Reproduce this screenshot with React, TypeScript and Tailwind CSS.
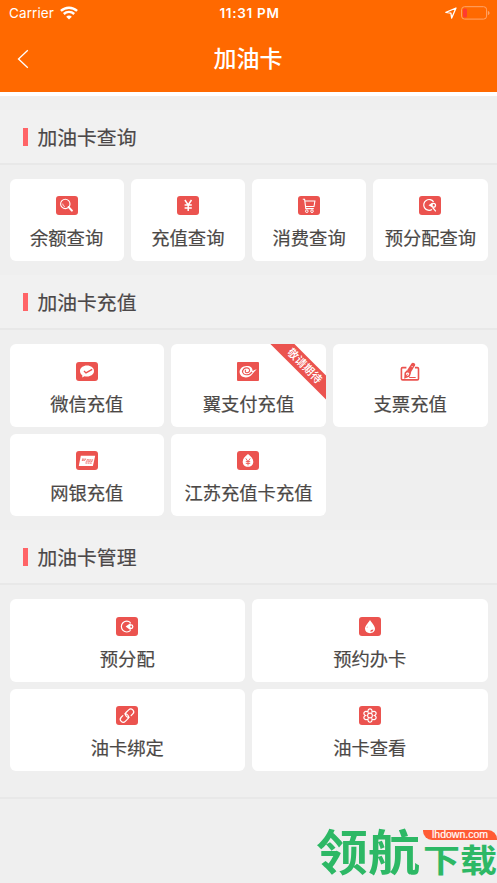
import type { ReactNode } from "react";

type Item = { label: string; icon: ReactNode; soon?: boolean };

const RED = "#eb534f";

function Tile({ children, r = 3 }: { children?: ReactNode; r?: number }) {
  return (
    <svg width="22" height="19" viewBox="0 0 22 19" fill="none" stroke="#fff" strokeWidth="1" className="block">
      <rect width="22" height="19" rx={r} fill={RED} stroke="none" />
      {children}
    </svg>
  );
}

const SearchIcon = (
  <Tile>
    <circle cx="9.3" cy="7.9" r="4.7" strokeWidth="1.1" />
    <path d="M6.7 7.6a2.9 2.9 0 0 0 2.2 3" strokeWidth="0.8" />
    <path d="m12.7 11.1 3.2 3.5" strokeWidth="2.1" strokeLinecap="round" />
  </Tile>
);
const YenIcon = (
  <Tile>
    <path d="m7.9 4 3.3 5 3.3-5M11.2 9v6M7.6 9.1h7.2M7.6 11.9h7.2" strokeWidth="1.5" />
  </Tile>
);
const CartIcon = (
  <Tile>
    <path d="M4.8 3.2h1.8l1.2 9.4h8M7 5h9.9l-.9 5.5H7.8" strokeWidth="1.1" />
    <circle cx="8.8" cy="15.2" r="1.3" />
    <circle cx="14" cy="15.2" r="1.3" />
  </Tile>
);
const AllocateSearchIcon = (
  <Tile>
    <path d="M14.6 5.9A5.4 5.4 0 1 0 13 13.5M13.7 11.5l3.1 3.8" strokeWidth="1.2" />
    <path d="m9.5 9.2 4-2.7v5z" fill="#fff" stroke="none" />
    <circle cx="14.6" cy="9.3" r="1.9" strokeWidth="1.3" />
  </Tile>
);
const AllocateIcon = (
  <Tile>
    <path d="M14.6 5.8a5.4 5.4 0 1 0 0 7.6" strokeWidth="1.2" />
    <path d="m9.6 9.6 5-3.6v7.2z" fill="#fff" stroke="none" />
    <circle cx="15" cy="9.7" r="1.8" strokeWidth="1.3" />
    <path d="M14.4 9.7h1.4" stroke={RED} strokeWidth="1" />
  </Tile>
);
const WechatIcon = (
  <Tile>
    <path d="M11 3.6c-4 0-7 2.4-7 5.5 0 1.8.9 3.3 2.4 4.3l-.2 2 2.3-1.2c.8.3 1.6.4 2.5.4 4 0 7-2.4 7-5.5s-3-5.5-7-5.5z" fill="#fff" stroke="none" />
    <path d="m8 9 2 1.9 6.2-3.6" stroke={RED} strokeWidth="1.4" />
  </Tile>
);
const BestpayIcon = (
  <Tile r={1}>
    <path d="M9.4 3.900c4.300-.3 6.500 2.300 6.100 5.200 1.200-.8 2.400-1.900 4.200-1.700-2.300 1.400-3.400 3.700-5.200 5.700-3 3.600-11.300 3.400-11.900-2.800C2.300 6.700 5.400 4.200 9.400 3.900z" fill="#fff" stroke="none" />
    <path d="M9 8.100c-1.200.5-1 2.600.9 2.700 1.800 0 2.900-1.300 2.700-2.800C12.200 5.500 8.600 5.200 6.700 7c-2.200 2.200-1 5.500 2.200 5.800 2.800.2 4.800-1.200 6.200-3" stroke={RED} strokeWidth="1.100" />
  </Tile>
);
const ChequeIcon = (
  <svg width="22" height="19" viewBox="0 0 22 19" fill="none" stroke={RED} strokeWidth="1.6" className="block">
    <path d="M7.4 5.6H3.6A1.2 1.2 0 0 0 2.4 6.8v9.9c0 .7.5 1.2 1.2 1.2h14.7c.7 0 1.2-.5 1.2-1.2V6.8c0-.7-.5-1.2-1.2-1.2h-2.4" />
    <path d="M10.2 15.5h6.5" strokeWidth="1" />
    <path d="m8.1 8.3 4.6-7.1c1-1.500 4.300.3 3.400 2l-4.500 7.500z" fill={RED} stroke="none" />
    <path d="m8.2 9.1 3 1.8-1 3-4.1 1.7.2-4.6z" strokeWidth="1.6" />
    <path d="m6.2 15.4 2.5-3.6" strokeWidth=".9" />
    <circle cx="13.1" cy="4.6" r=".6" fill="#fff" stroke="none" />
  </svg>
);
const BankIcon = (
  <Tile>
    <path d="M4.8 4.7h14.4l-2.3 10.2H2.8z" fill="#fff" stroke="none" />
    <path d="m6 8.1 4.5.1M11 8.8l6.1.2M5.8 9.3l3.1.1M9.8 10.1l6.7.2M9.4 12l6.3.1" stroke={RED} strokeWidth=".9" strokeDasharray="1.9 .4" />
  </Tile>
);
const YenDropIcon = (
  <Tile>
    <path d="M11 3.1C8.2 5.2 5.7 7.6 5.7 10.7c0 3 2.2 5 5.3 5s5.3-2 5.3-5c0-3.1-2.5-5.5-5.3-7.6z" fill="#fff" stroke="none" />
    <path d="m8.8 7.4 2.2 3.2 2.2-3.2M11 10.4v4M8.8 10.6h4.4M8.8 12.4h4.4" stroke={RED} strokeWidth=".9" />
  </Tile>
);
const DropIcon = (
  <Tile>
    <path d="M11 3C9.6 5.6 6 8.6 6 11.8c0 2.8 2.2 4.4 5 4.4s5-1.6 5-4.4C16 8.6 12.4 5.6 11 3z" fill="#fff" stroke="none" />
    <path d="M11.2 14.6c.1-1.5 1.3-2.2 3.2-2.2-.2 1.6-1.4 2.5-3.2 2.2zM7.3 10.2l1.3-.8v1.2z" fill={RED} stroke="none" />
  </Tile>
);
const LinkIcon = (
  <Tile>
    <g transform="translate(11 9.6) rotate(-45)" strokeWidth="1.2" strokeLinecap="round">
      <path d="M.3 2.700C-1.500 1.800-1.700-2.900 1.800-2.900H5.300a2.900 2.900 0 0 1 0 5.800H3" />
      <path d="M-.3-2.700C1.500-1.800 1.700 2.900-1.800 2.900h-3.500a2.900 2.900 0 0 1 0-5.800H-3" />
    </g>
  </Tile>
);
const FlowerIcon = (
  <Tile>
    <path d="M9 5.9c-.7-4.1 4.7-4.1 4 0 3.4-2.2 6 2.2 2.4 3.6 3.6 1.4 1 5.8-2.4 3.6.7 4.1-4.7 4.1-4 0-3.4 2.2-6-2.2-2.4-3.6C3 8.1 5.6 3.7 9 5.9z" strokeWidth="1.2" />
    <circle cx="11" cy="9.5" r="2.4" strokeWidth="1.1" />
  </Tile>
);

const sections: { title: string; cols: string; items: Item[] }[] = [
  {
    title: "加油卡查询",
    cols: "grid-cols-4",
    items: [
      { label: "余额查询", icon: SearchIcon },
      { label: "充值查询", icon: YenIcon },
      { label: "消费查询", icon: CartIcon },
      { label: "预分配查询", icon: AllocateSearchIcon },
    ],
  },
  {
    title: "加油卡充值",
    cols: "grid-cols-3",
    items: [
      { label: "微信充值", icon: WechatIcon },
      { label: "翼支付充值", icon: BestpayIcon, soon: true },
      { label: "支票充值", icon: ChequeIcon },
      { label: "网银充值", icon: BankIcon },
      { label: "江苏充值卡充值", icon: YenDropIcon },
    ],
  },
  {
    title: "加油卡管理",
    cols: "grid-cols-2",
    items: [
      { label: "预分配", icon: AllocateIcon },
      { label: "预约办卡", icon: DropIcon },
      { label: "油卡绑定", icon: LinkIcon },
      { label: "油卡查看", icon: FlowerIcon },
    ],
  },
];

function Card({ label, icon, soon }: Item) {
  return (
    <div className="relative flex h-[82.5px] flex-col items-center overflow-hidden rounded-md bg-white pt-[17.5px]">
      {icon}
      <span className="mt-[8px] text-[18.3px] leading-7 whitespace-nowrap text-[#4b4846] [-webkit-text-stroke:0.2px_#4b4846]">
        {label}
      </span>
      {soon && (
        <div className="absolute top-[13px] -right-[18.5px] flex h-[16.5px] w-[80px] rotate-45 items-center justify-center bg-[#eb534f] pb-px pl-[2px] text-[11px] leading-none font-medium whitespace-nowrap text-white">
          敬请期待
        </div>
      )}
    </div>
  );
}

export default function App() {
  return (
    <div className="relative h-[883px] w-[497px] overflow-hidden bg-[#efefef] font-['Noto_Sans_CJK_SC',sans-serif]">
      <header className="h-24 border-b-4 border-white bg-[#ff6900] text-white">
        <div className="grid h-[26px] grid-cols-3 items-center pr-[7px] pl-[9px] font-['Inter','Liberation_Sans',sans-serif] text-[13.5px]">
          <div className="flex items-center gap-[6px]">
            <span className="tracking-[0.1px]">Carrier</span>
            <svg width="18" height="14" viewBox="0 0 18 14" fill="none" stroke="#fff" strokeWidth="2.4">
              <path d="M.9 4.9c4.6-4.3 11.6-4.3 16.2 0M3.8 8c3-2.8 7.4-2.8 10.4 0" />
              <path d="M6.2 10.7c1.6-1.5 4-1.5 5.6 0L9 13.5z" fill="#fff" stroke="none" />
            </svg>
          </div>
          <span className="text-center font-semibold tracking-[0.7px] whitespace-nowrap">11:31 PM</span>
          <div className="flex items-center justify-end gap-1">
            <svg width="12" height="12" viewBox="0 0 12 12" fill="none" stroke="#fff" strokeWidth="1.3" strokeLinejoin="round">
              <path d="M11 1 .9 5.4l5 .7.8 5z" />
            </svg>
            <svg width="29" height="14" viewBox="0 0 29 14" fill="none">
              <rect x=".6" y=".7" width="25" height="12.4" rx="3" stroke="#ffa56a" />
              <rect x="2" y="2.5" width="4" height="9" rx="1.6" fill="#ff3b30" />
              <path d="M26.9 4.9c2.2.6 2.2 3.6 0 4.2z" fill="#ffa56a" />
            </svg>
          </div>
        </div>
        <div className="flex h-[66px] items-center">
          <svg width="12" height="20" viewBox="0 0 12 20" fill="none" stroke="#fff" strokeWidth="1.3" className="ml-[17px]">
            <path d="M10.8 1.3 1.5 10l9.3 8.7" />
          </svg>
          <h1 className="mr-[30px] flex-1 pb-[3px] text-center text-[23px] leading-none font-medium">加油卡</h1>
        </div>
      </header>
      <main className="pt-[13.5px]">
        {sections.map((s) => (
          <section key={s.title} className="pb-[13.8px]">
            <div className="flex h-[55px] items-center border-b-2 border-[#e8e8e8] bg-[#f1f1f1] pt-[1.5px] pl-[22.5px]">
              <i className="h-[18px] w-[5.5px] bg-[#ff6467]" />
              <h2 className="ml-[9.5px] text-[19.8px] leading-none text-[#4b4748] [-webkit-text-stroke:0.2px_#4b4748]">
                {s.title}
              </h2>
            </div>
            <div className={`grid gap-[7px] px-[9.5px] pt-[14.2px] ${s.cols}`}>
              {s.items.map((it) => (
                <Card key={it.label} {...it} />
              ))}
            </div>
          </section>
        ))}
        <div className="mt-[12px] border-t-2 border-[#e8e8e8]" />
      </main>
      <div className="absolute right-0 bottom-0 flex h-[57px] w-[181px] text-[#2db865]">
        <span className="h-[52px] w-[107px] origin-top scale-y-[0.92] text-[52px] leading-[52px] font-bold whitespace-nowrap">
          领航
        </span>
        <div className="flex w-[74px] flex-col">
          <span className="mt-[4px] h-[10px] w-full rounded-tr-[9px] rounded-bl-[9px] bg-[#ff5b35] text-center font-['Liberation_Sans',sans-serif] text-[10.5px] leading-[9px] text-white [-webkit-text-stroke:0.2px_white]">
            lhdown.com
          </span>
          <span className="mt-[2px] origin-top scale-y-[0.86] text-[37px] leading-[38px] font-bold whitespace-nowrap">下载</span>
        </div>
      </div>
    </div>
  );
}
